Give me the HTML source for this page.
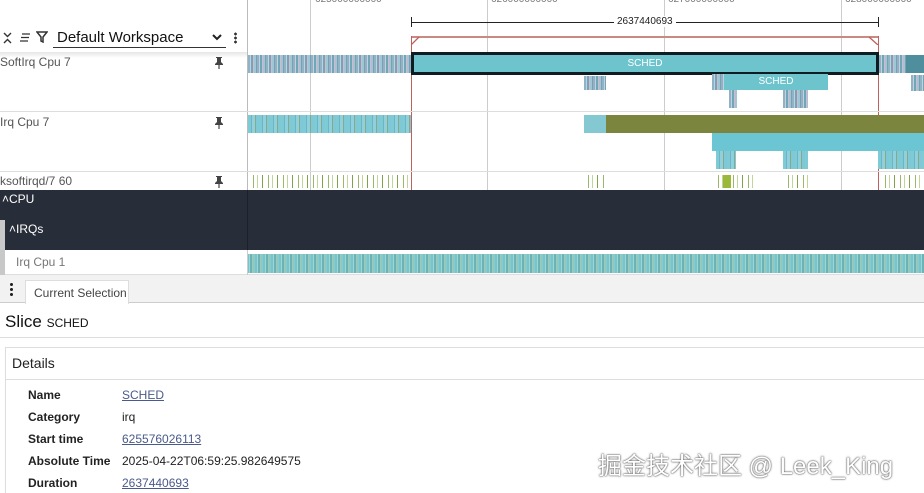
<!DOCTYPE html>
<html><head><meta charset="utf-8"><style>
*{box-sizing:border-box;margin:0;padding:0}
html,body{width:924px;height:493px;overflow:hidden}
body{background:#fff;font-family:"Liberation Sans",sans-serif;position:relative;color:#222}
.a{position:absolute}
.lbl{font-size:12px;color:#555}
.stripe1{background:repeating-linear-gradient(90deg,#8fb3c4 0 2px,#c4cfe0 2px 3px,#6fa6b8 3px 5px,#d8b7cc 5px 6px,#9ec6d4 6px 8px,#7d9fb3 8px 9px)}
.stripe2{background:repeating-linear-gradient(90deg,#7ecbd6 0 3px,#6bb5c4 3px 4px,#8fd0dc 4px 7px,#85a98a 7px 8px,#7ec9d5 8px 11px)}
.stripe3{background:repeating-linear-gradient(90deg,transparent 0 5px,#9ab86a 5px 6px,transparent 6px 9px,#c1d49a 9px 10px,transparent 10px 14px,#7ea34a 14px 15px)}
.stripe4{background:repeating-linear-gradient(90deg,#7ac3c8 0 2px,#9bd6dc 2px 3px,#6fb2b5 3px 5px,#a7c6a6 5px 6px,#85cbd2 6px 8px)}
.grid{position:absolute;top:0;width:1px;background:#ccc;height:190px}
.pin{position:absolute;left:213px}
.rl{position:absolute;top:-6px;font-size:10px;color:#777}
</style></head><body>
<svg class="a" style="left:3px;top:32px" width="9" height="12"><path d="M1 1L4.5 4.5L8 1M1 11L4.5 7.5L8 11" fill="none" stroke="#333" stroke-width="1.4"/></svg>
<svg class="a" style="left:19px;top:33px" width="12" height="10"><path d="M3 1H11M2 4.5H10M1 8H9" fill="none" stroke="#333" stroke-width="1.3"/></svg>
<svg class="a" style="left:36px;top:31px" width="12" height="12"><path d="M1 1H11L7 6V11L5 10V6Z" fill="none" stroke="#333" stroke-width="1.5"/></svg>
<div class="a" style="left:57px;top:29px;font-size:15px;color:#111">Default Workspace</div>
<div class="a" style="left:53px;top:47px;width:173px;height:1px;background:#333"></div>
<svg class="a" style="left:212px;top:34px" width="10" height="8"><path d="M1 1L5 5L9 1" fill="none" stroke="#222" stroke-width="2"/></svg>
<div class="a" style="left:234px;top:32px;width:3px;height:12px;background:radial-gradient(circle,#333 1.3px,transparent 1.5px) 0 0/3px 4px"></div>
<div class="a" style="left:0;top:52px;width:247px;height:6px;background:linear-gradient(#e6e6e6,#fff)"></div>
<div class="a" style="left:247px;top:0;width:1px;height:190px;background:#bbb"></div>
<div class="rl" style="left:315px">625000000000</div>
<div class="rl" style="left:491px">626000000000</div>
<div class="rl" style="left:668px">627000000000</div>
<div class="rl" style="left:845px">628000000000</div>
<div class="grid" style="left:310px"></div><div class="grid" style="left:487px"></div><div class="grid" style="left:664px"></div><div class="grid" style="left:841px"></div>
<div class="a" style="left:411px;top:22px;width:467px;height:1px;background:#222"></div>
<div class="a" style="left:411px;top:17px;width:1px;height:10px;background:#222"></div>
<div class="a" style="left:878px;top:17px;width:1px;height:10px;background:#222"></div>
<div class="a" style="left:614px;top:16px;font-size:10px;background:#fff;padding:0 3px">2637440693</div>
<div class="a" style="left:411px;top:36px;width:467px;height:2px;background:#c98a84"></div>
<svg class="a" style="left:411px;top:36px" width="9" height="9"><path d="M0 9L8 1" stroke="#c0605a" stroke-width="1.3"/></svg>
<svg class="a" style="left:869px;top:36px" width="9" height="9"><path d="M0 1L9 9" stroke="#c0605a" stroke-width="1.3"/></svg>
<div class="a" style="left:411px;top:36px;width:1px;height:154px;background:#c0605a"></div>
<div class="a" style="left:878px;top:36px;width:1px;height:154px;background:#c0605a"></div>
<div class="a" style="left:0;top:111px;width:924px;height:1px;background:#ddd"></div>
<div class="a" style="left:0;top:171px;width:924px;height:1px;background:#ddd"></div>
<div class="a lbl" style="left:0;top:55px">SoftIrq Cpu 7</div>
<div class="a lbl" style="left:0;top:115px">Irq Cpu 7</div>
<div class="a lbl" style="left:0;top:174px">ksoftirqd/7 60</div>
<svg class="pin" style="top:56px" width="12" height="14"><path d="M3 1H9V2H8V6L10 8V9H6.6V13H5.4V9H2V8L4 6V2H3Z" fill="#444"/></svg>
<svg class="pin" style="top:116px" width="12" height="14"><path d="M3 1H9V2H8V6L10 8V9H6.6V13H5.4V9H2V8L4 6V2H3Z" fill="#444"/></svg>
<svg class="pin" style="top:175px" width="12" height="14"><path d="M3 1H9V2H8V6L10 8V9H6.6V13H5.4V9H2V8L4 6V2H3Z" fill="#444"/></svg>
<div class="a stripe1" style="left:248px;top:55px;width:163px;height:18px"></div>
<div class="a" style="left:411px;top:52px;width:468px;height:23px;background:#6ec4cc;border:3px solid #0f1c22;color:#fff;font-size:10px;text-align:center;line-height:17px">SCHED</div>
<div class="a stripe1" style="left:879px;top:55px;width:45px;height:18px"></div>
<div class="a" style="left:906px;top:55px;width:18px;height:18px;background:#4f8f9d"></div>
<div class="a stripe1" style="left:584px;top:76px;width:22px;height:14px"></div>
<div class="a" style="left:724px;top:74px;width:104px;height:16px;background:#6ec4cc;color:#fff;font-size:10px;text-align:center;line-height:16px">SCHED</div>
<div class="a stripe1" style="left:712px;top:74px;width:12px;height:16px"></div>
<div class="a stripe1" style="left:729px;top:90px;width:8px;height:18px"></div>
<div class="a stripe1" style="left:783px;top:90px;width:25px;height:18px"></div>
<div class="a stripe1" style="left:911px;top:75px;width:13px;height:16px"></div>
<div class="a stripe2" style="left:248px;top:115px;width:163px;height:18px"></div>
<div class="a" style="left:584px;top:115px;width:22px;height:18px;background:#84c9d2"></div>
<div class="a" style="left:606px;top:115px;width:318px;height:18px;background:#7c853d"></div>
<div class="a" style="left:712px;top:133px;width:212px;height:18px;background:#6bc5d2"></div>
<div class="a stripe2" style="left:716px;top:151px;width:20px;height:18px"></div>
<div class="a stripe2" style="left:783px;top:151px;width:25px;height:18px"></div>
<div class="a stripe2" style="left:878px;top:151px;width:46px;height:18px"></div>
<div class="a stripe3" style="left:248px;top:175px;width:163px;height:13px"></div>
<div class="a stripe3" style="left:583px;top:175px;width:22px;height:13px"></div>
<div class="a stripe3" style="left:713px;top:175px;width:40px;height:13px"></div>
<div class="a" style="left:723px;top:175px;width:8px;height:13px;background:#9ab83a"></div>
<div class="a stripe3" style="left:783px;top:175px;width:25px;height:13px"></div>
<div class="a stripe3" style="left:880px;top:175px;width:44px;height:13px"></div>
<div class="a" style="left:0;top:190px;width:924px;height:60px;background:#282e39"></div>
<div class="a" style="left:247px;top:190px;width:1px;height:60px;background:#1c2029"></div>
<div class="a" style="left:0;top:220px;width:5px;height:55px;background:#c8c8c8"></div>
<div class="a" style="left:2px;top:192px;font-size:12px;color:#fff">˄CPU</div>
<div class="a" style="left:9px;top:222px;font-size:12px;color:#fff">˄IRQs</div>
<div class="a" style="left:5px;top:250px;width:919px;height:25px;background:#fff;border-bottom:1px solid #ddd"></div>
<div class="a lbl" style="left:16px;top:255px;color:#777">Irq Cpu 1</div>
<div class="a stripe4" style="left:247px;top:254px;width:677px;height:19px"></div>
<div class="a" style="left:247px;top:250px;width:1px;height:25px;background:#ccc"></div>
<div class="a" style="left:0;top:275px;width:924px;height:28px;background:#f2f2f2;border-bottom:1px solid #ccc"></div>
<div class="a" style="left:10px;top:282px;width:3px;height:14px;background:radial-gradient(circle,#222 1.4px,transparent 1.6px) 0 0/3px 5px"></div>
<div class="a" style="left:25px;top:280px;width:104px;height:24px;background:#fff;border:1px solid #ddd;border-bottom:none;font-size:12px;color:#444;padding:5px 0 0 8px">Current Selection</div>
<div class="a" style="left:5px;top:312px;font-size:17px;color:#111">Slice <span style="font-size:12px">SCHED</span></div>
<div class="a" style="left:0;top:337px;width:924px;height:1px;background:#ddd"></div>
<div class="a" style="left:5px;top:347px;width:930px;height:160px;border:1px solid #ddd"></div>
<div class="a" style="left:5px;top:379px;width:924px;height:1px;background:#ddd"></div>
<div class="a" style="left:12px;top:355px;font-size:14px;color:#222">Details</div>
<div class="a" style="left:28px;top:384px;font-size:12px;font-weight:bold;line-height:22px">Name<br>Category<br>Start time<br>Absolute Time<br>Duration</div>
<div class="a" style="left:122px;top:384px;font-size:12px;line-height:22px"><u style="color:#4a5a8a">SCHED</u><br>irq<br><u style="color:#4a5a8a">625576026113</u><br>2025-04-22T06:59:25.982649575<br><u style="color:#4a5a8a">2637440693</u></div>
<div class="a" style="left:598px;top:446px;font-size:24px;color:#fff;font-family:'Liberation Sans','Noto Sans CJK SC',sans-serif;text-shadow:0 0 2px #555,0 0 1px #333;white-space:nowrap">掘金技术社区 @ Leek_King</div>
</body></html>
